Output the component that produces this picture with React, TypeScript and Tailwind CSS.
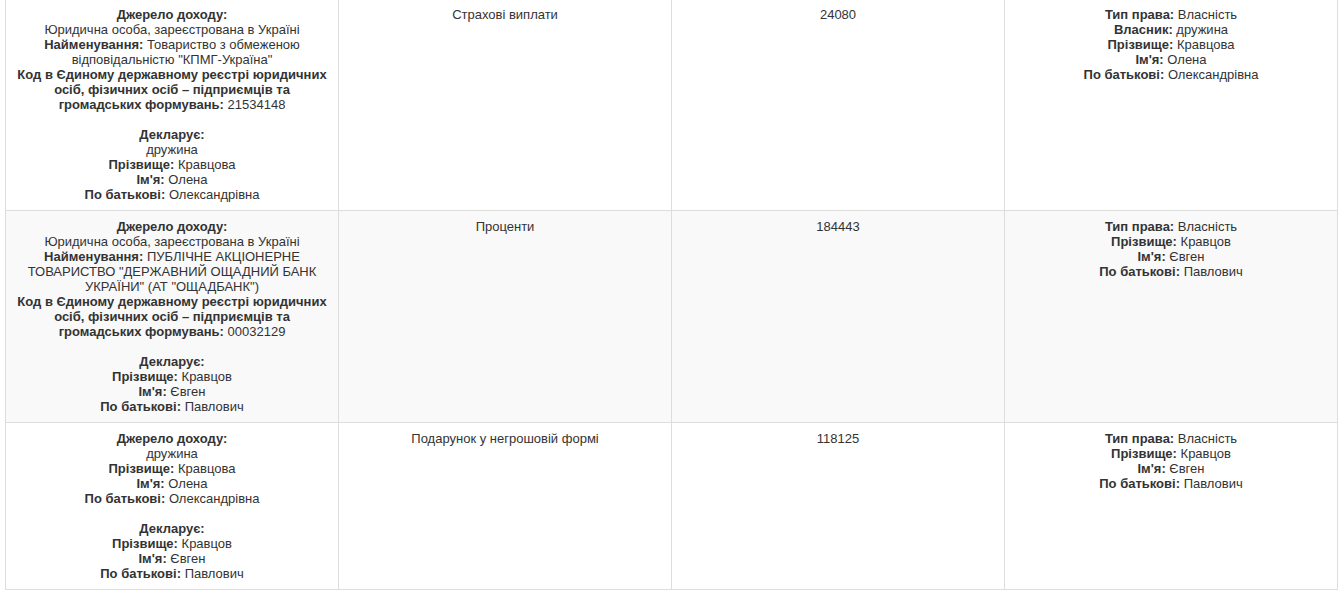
type Field = { label?: string; value?: string; gap?: boolean };

type Row = {
  source: Field[];
  kind: string;
  amount: string;
  owner: Field[];
};

const rows: Row[] = [
  {
    source: [
      { label: 'Джерело доходу:' },
      { value: 'Юридична особа, зареєстрована в Україні' },
      { label: 'Найменування:', value: 'Товариство з обмеженою відповідальністю "КПМГ-Україна"' },
      {
        label: 'Код в Єдиному державному реєстрі юридичних осіб, фізичних осіб – підприємців та громадських формувань:',
        value: '21534148',
      },
      { gap: true },
      { label: 'Декларує:' },
      { value: 'дружина' },
      { label: 'Прізвище:', value: 'Кравцова' },
      { label: "Ім'я:", value: 'Олена' },
      { label: 'По батькові:', value: 'Олександрівна' },
    ],
    kind: 'Страхові виплати',
    amount: '24080',
    owner: [
      { label: 'Тип права:', value: 'Власність' },
      { label: 'Власник:', value: 'дружина' },
      { label: 'Прізвище:', value: 'Кравцова' },
      { label: "Ім'я:", value: 'Олена' },
      { label: 'По батькові:', value: 'Олександрівна' },
    ],
  },
  {
    source: [
      { label: 'Джерело доходу:' },
      { value: 'Юридична особа, зареєстрована в Україні' },
      {
        label: 'Найменування:',
        value: 'ПУБЛІЧНЕ АКЦІОНЕРНЕ ТОВАРИСТВО "ДЕРЖАВНИЙ ОЩАДНИЙ БАНК УКРАЇНИ" (АТ "ОЩАДБАНК")',
      },
      {
        label: 'Код в Єдиному державному реєстрі юридичних осіб, фізичних осіб – підприємців та громадських формувань:',
        value: '00032129',
      },
      { gap: true },
      { label: 'Декларує:' },
      { label: 'Прізвище:', value: 'Кравцов' },
      { label: "Ім'я:", value: 'Євген' },
      { label: 'По батькові:', value: 'Павлович' },
    ],
    kind: 'Проценти',
    amount: '184443',
    owner: [
      { label: 'Тип права:', value: 'Власність' },
      { label: 'Прізвище:', value: 'Кравцов' },
      { label: "Ім'я:", value: 'Євген' },
      { label: 'По батькові:', value: 'Павлович' },
    ],
  },
  {
    source: [
      { label: 'Джерело доходу:' },
      { value: 'дружина' },
      { label: 'Прізвище:', value: 'Кравцова' },
      { label: "Ім'я:", value: 'Олена' },
      { label: 'По батькові:', value: 'Олександрівна' },
      { gap: true },
      { label: 'Декларує:' },
      { label: 'Прізвище:', value: 'Кравцов' },
      { label: "Ім'я:", value: 'Євген' },
      { label: 'По батькові:', value: 'Павлович' },
    ],
    kind: 'Подарунок у негрошовій формі',
    amount: '118125',
    owner: [
      { label: 'Тип права:', value: 'Власність' },
      { label: 'Прізвище:', value: 'Кравцов' },
      { label: "Ім'я:", value: 'Євген' },
      { label: 'По батькові:', value: 'Павлович' },
    ],
  },
];

function Fields({ items }: { items: Field[] }) {
  return (
    <>
      {items.map((f, i) =>
        f.gap ? (
          <div key={i} className="h-[15px]" />
        ) : (
          <div key={i}>
            {f.label && <b className="font-bold">{f.label}</b>}
            {f.label && f.value ? ' ' : null}
            {f.value}
          </div>
        )
      )}
    </>
  );
}

export default function App() {
  const cell = 'border border-[#ddd] p-2 align-top text-center';

  return (
    <div className="bg-white min-h-screen pl-[5px] -mt-[2px] font-['Liberation_Sans',Arial,sans-serif] text-[13px] leading-[15px] text-[#333]">
      <table className="table-fixed w-[1333px] border-collapse">
        <colgroup>
          <col className="w-[333px]" />
          <col className="w-[333px]" />
          <col className="w-[333px]" />
          <col className="w-[333px]" />
        </colgroup>
        <tbody>
          {rows.map((r, i) => (
            <tr key={i} className={i % 2 === 1 ? 'bg-[#f9f9f9]' : 'bg-white'}>
              <td className={cell}>
                <Fields items={r.source} />
              </td>
              <td className={cell}>{r.kind}</td>
              <td className={cell}>{r.amount}</td>
              <td className={cell}>
                <Fields items={r.owner} />
              </td>
            </tr>
          ))}
        </tbody>
      </table>
    </div>
  );
}
